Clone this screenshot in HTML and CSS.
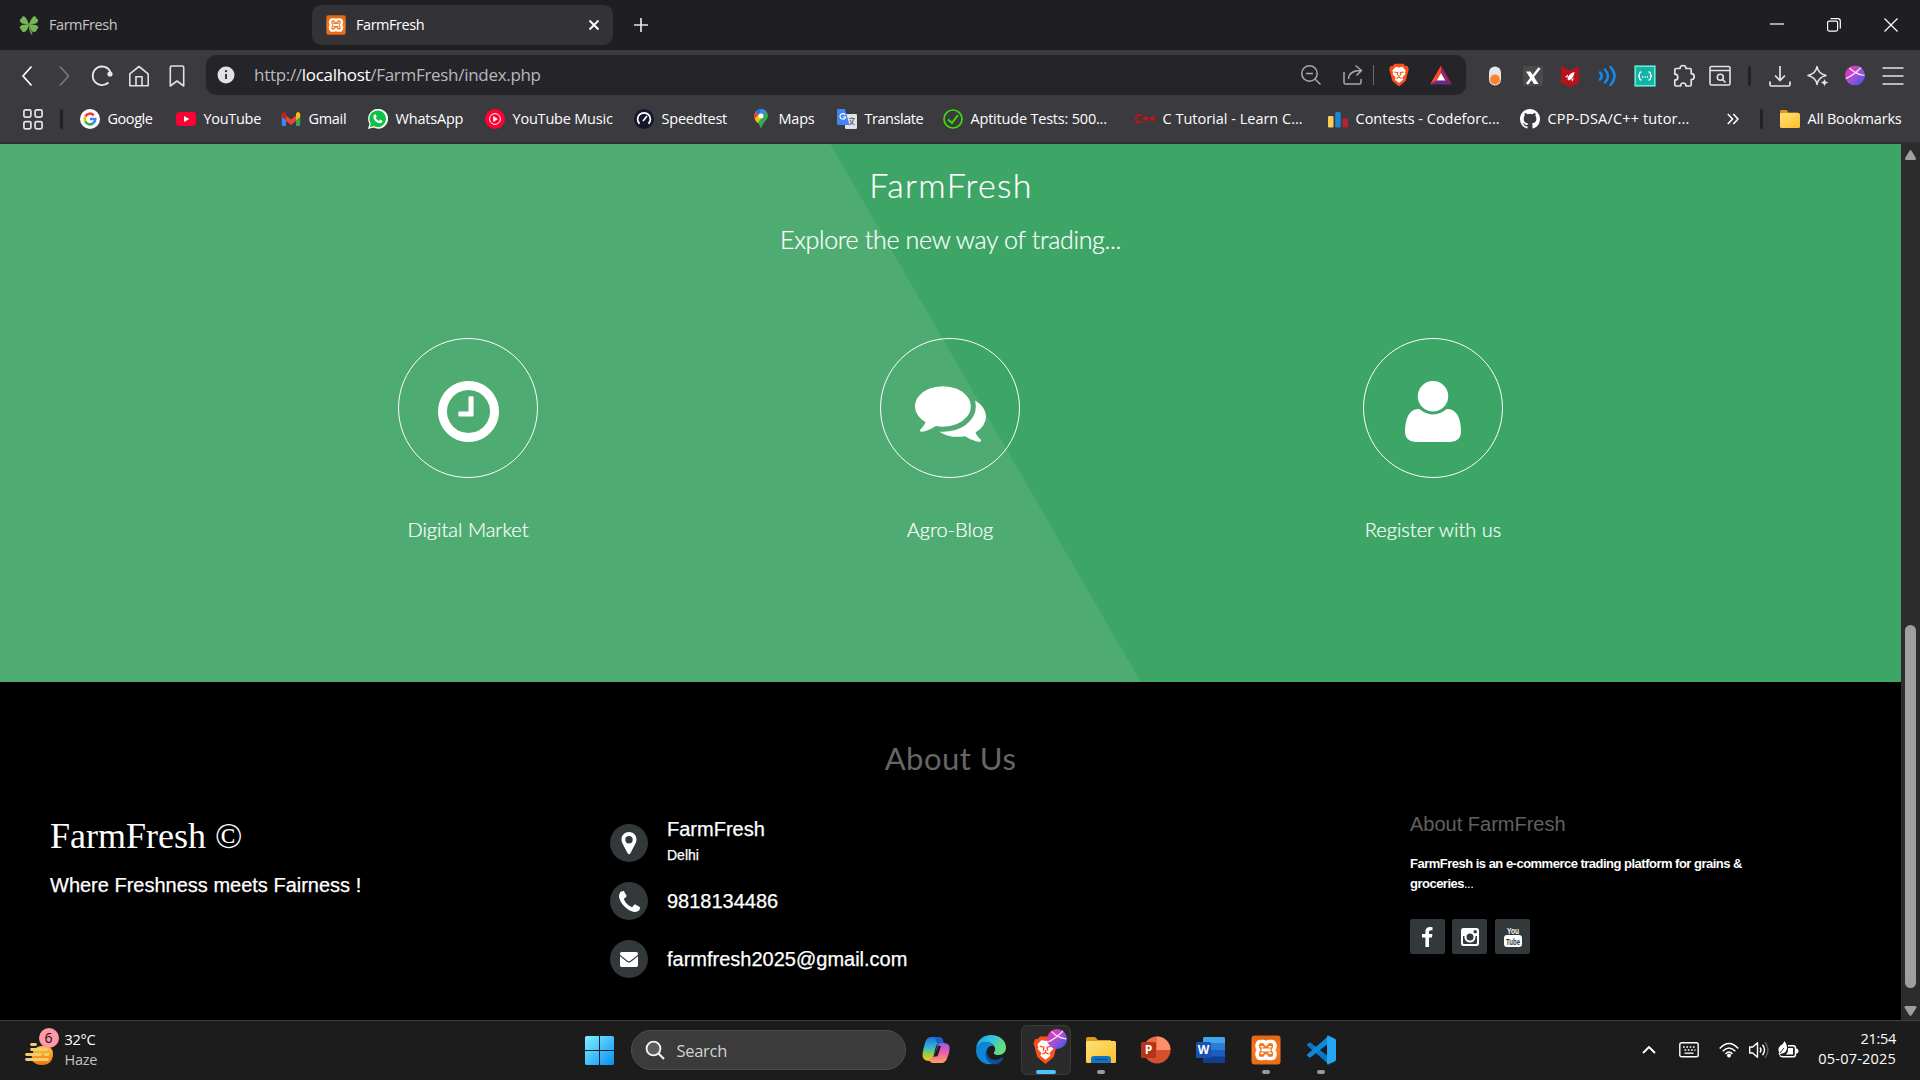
FILE: index.html
```html
<!DOCTYPE html>
<html lang="en">
<head>
<meta charset="utf-8">
<title>FarmFresh</title>
<link rel="stylesheet" href="styles.css">
</head>
<body>
<svg class="defs" width="0" height="0">
  <defs>
    <linearGradient id="gBall" x1="0" y1="0" x2="1" y2="1"><stop offset="0" stop-color="#f52fa0"/><stop offset=".5" stop-color="#a94fd8"/><stop offset="1" stop-color="#3157e0"/></linearGradient>
    <linearGradient id="gXampp" x1="0" y1="0" x2="0" y2="1"><stop offset="0" stop-color="#e0660f"/><stop offset=".5" stop-color="#fb7a24"/><stop offset="1" stop-color="#e86a12"/></linearGradient>
    <linearGradient id="gFolder" x1="0" y1="0" x2="1" y2="1"><stop offset="0" stop-color="#ffe07a"/><stop offset="1" stop-color="#fbc02a"/></linearGradient>
    <linearGradient id="gWin" x1="0" y1="0" x2="1" y2="1"><stop offset="0" stop-color="#7df0ff"/><stop offset="1" stop-color="#0a8ff5"/></linearGradient>
    <linearGradient id="gEdge" x1="0" y1="0" x2="1" y2=".4"><stop offset="0" stop-color="#1f9de0"/><stop offset=".5" stop-color="#2fc3e0"/><stop offset="1" stop-color="#66e07a"/></linearGradient>
    <linearGradient id="gCopA" x1="0" y1="0" x2="0" y2="1"><stop offset="0" stop-color="#1a6fe8"/><stop offset=".45" stop-color="#35b8d0"/><stop offset=".7" stop-color="#8ed04a"/><stop offset="1" stop-color="#ffc812"/></linearGradient>
    <linearGradient id="gCopB" x1="0" y1="0" x2="0" y2="1"><stop offset="0" stop-color="#9a55ee"/><stop offset=".5" stop-color="#ee5fa8"/><stop offset="1" stop-color="#ffa060"/></linearGradient>
    <linearGradient id="gSun" x1="0" y1="0" x2="0" y2="1"><stop offset="0" stop-color="#ffc83a"/><stop offset="1" stop-color="#ee7410"/></linearGradient>
    <symbol id="xampp" viewBox="0 0 30 30">
      <rect x=".5" y=".5" width="29" height="29" rx="3" fill="url(#gXampp)"/>
      <path d="M9.500 6.500h3q1.500 0 2.500 2.500 1-2.500 2.500-2.500h3c3.500 0 4.500 5 2 8.500 2.500 3.500 1.500 8.500-2 8.500h-3q-1.500 0-2.500-2.500-1 2.500-2.500 2.500h-3c-3.500 0-4.500-5-2-8.500-2.500-3.500-1.500-8.500 2-8.500z" fill="none" stroke="#fff" stroke-width="3.600" stroke-linejoin="round"/>
      <path d="M10.500 15h9M11 11v1.500M19 11v1.500M11 17.500V19M19 17.500V19" fill="none" stroke="#fff" stroke-width="3"/>
    </symbol>
    <symbol id="brave" viewBox="0 0 24 28">
      <path d="M7 1h10l2.500 2.500L22 3.600l1.500 4-1 3-2.600 10L12 27.500l-7.900-6.900-2.600-10-1-3 1.500-4 2.500-.1z" fill="#fb4f1c"/>
      <path d="M8.200 4.500 12 5.300l3.800-.8 4 4.200-1 2.300.8 1.700-3.700 4.200 1 2.500-4.900 4-4.900-4 1-2.500L4.400 12.700l.8-1.700-1-2.300z" fill="#fff"/>
      <path d="M6.500 10.500l4 .8-.6 3.200M17.500 10.500l-4 .8.6 3.200M9 18l3-1.600 3 1.600M12 16v-2" fill="none" stroke="#fb4f1c" stroke-width="1.300"/>
    </symbol>
    <symbol id="ball" viewBox="0 0 20 20">
      <circle cx="10" cy="10" r="10" fill="url(#gBall)"/>
      <path d="M.8 13Q9 9.500 16 2M4.500 2.500Q10 8.500 19.500 10" fill="none" stroke="#fbdcf6" stroke-width="1.200"/>
    </symbol>
    <symbol id="folder" viewBox="0 0 20 20">
      <path d="M0 2.500Q0 1 1.500 1h5l2 2.500H18V8H0z" fill="#dc9a12"/>
      <rect x="0" y="4" width="20" height="15" rx="1.500" fill="url(#gFolder)"/>
    </symbol>
  </defs>
</svg>

<header class="browser">
  <div class="tabs">
    <div class="tab">
      <svg class="fav" viewBox="0 0 20 20"><path d="M10 9.500C8 4 6 0 3.500 1.500 2.500 2.300 3 3.500 2.500 3.500 0 3.500.5 8 4 8.800 7 9.400 9 9.500 10 9.500zM10 9.500C12 4 14 0 16.500 1.500c1 .8.500 2 1 2 2.500 0 2 4.500-1.500 5.300-3 .6-5 .7-6 .7zM10 9.500C5 9.500.5 10 .8 12.500c.2 1.500 1.400 1.500 1.400 2 0 2.500 3.300 3.500 5 1.500 1.500-2 2.500-4.500 2.800-6.500zM10 9.500c5 0 9.500.5 9.200 3-.2 1.500-1.400 1.500-1.400 2 0 2.500-3.300 3.500-5 1.500-1.500-2-2.500-4.500-2.800-6.500z" fill="#75b555"/><path d="M10 9q.2 6 3 10.500" fill="none" stroke="#5d9a3e" stroke-width="1.600"/></svg>
      <span class="ui">FarmFresh</span>
    </div>
    <div class="tab tab-active">
      <svg class="fav"><use href="#xampp"/></svg>
      <span class="ui">FarmFresh</span>
      <svg class="tab-close" viewBox="0 0 12 12"><path d="M1.500 1.500l9 9M10.500 1.500l-9 9" stroke="#fff" stroke-width="1.900"/></svg>
    </div>
    <svg class="plus" viewBox="0 0 14 14"><path d="M7 0v14M0 7h14" stroke="#e4e4e6" stroke-width="1.700"/></svg>
    <div class="wincontrols">
      <svg viewBox="0 0 14 14"><path d="M0 6h14" stroke="#fff" stroke-width="1.200"/></svg>
      <svg viewBox="0 0 14 14"><rect x=".6" y="3.100" width="10" height="10" rx="1.500" fill="none" stroke="#fff" stroke-width="1.200"/><path d="M3.500.7h7.300q2.500 0 2.500 2.500v7.300" fill="none" stroke="#fff" stroke-width="1.200"/></svg>
      <svg viewBox="0 0 14 14"><path d="M.5.5l13 13M13.500.5l-13 13" stroke="#fff" stroke-width="1.200"/></svg>
    </div>
  </div>

  <div class="toolbar">
    <div class="slots nav">
      <svg viewBox="0 0 24 24"><path d="M16.500 2.500 8 12l8.500 9.500" fill="none" stroke="#fff" stroke-width="1.700"/></svg>
      <svg viewBox="0 0 24 24"><path d="M8 2.500 16.500 12 8 21.500" fill="none" stroke="#77767b" stroke-width="1.700"/></svg>
      <svg viewBox="0 0 24 24"><path d="M18.500 18.500A9.300 9.300 0 1 1 20.500 8" fill="none" stroke="#e8e8ea" stroke-width="1.800"/><circle cx="20" cy="10" r="2.600" fill="#e8e8ea"/></svg>
      <svg viewBox="0 0 24 24"><path d="M2.800 9.800 12 2.500l9.200 7.300v12H2.800z" fill="none" stroke="#e0e0e2" stroke-width="1.600" stroke-linejoin="round"/><path d="M9 21.500v-8.700h6v8.700" fill="none" stroke="#e0e0e2" stroke-width="1.600"/></svg>
      <svg viewBox="0 0 24 24"><path d="M5.300 22V3.500Q5.300 2 6.800 2h10.400q1.500 0 1.500 1.500V22L12 17z" fill="none" stroke="#e0e0e2" stroke-width="1.600" stroke-linejoin="round"/></svg>
    </div>
    <div class="urlbar">
      <svg class="info" viewBox="0 0 18 18"><circle cx="9" cy="9" r="8.500" fill="#e2e1e6"/><path d="M9 8v5" stroke="#252428" stroke-width="1.800"/><circle cx="9" cy="5.200" r="1.100" fill="#252428"/></svg>
      <span class="url">http://<b>localhost</b>/FarmFresh/index.php</span>
      <div class="urltools">
        <svg viewBox="0 0 24 24"><circle cx="10.500" cy="10.500" r="7.700" fill="none" stroke="#a9a9ad" stroke-width="1.500"/><path d="M16 16l5.500 5.500M7 10.500h7" stroke="#a9a9ad" stroke-width="1.500"/></svg>
        <svg viewBox="0 0 24 24"><path d="M3 9v10.500Q3 21 4.500 21h14q1.500 0 1.500-1.500V16" fill="none" stroke="#a9a9ad" stroke-width="1.500"/><path d="M7.500 16q.5-8.500 12.500-8.500M14.500 2.500l6 5-5 5" fill="none" stroke="#a9a9ad" stroke-width="1.500"/></svg>
        <i></i>
        <svg viewBox="0 0 24 24"><use href="#brave" x="1.500" y="0" width="21" height="24"/></svg>
        <svg viewBox="0 0 24 24"><path d="M12 2.500 1 21.500l7-4L12 10z" fill="#ff4724"/><path d="M12 2.500l11 19-7-4-4-7.500z" fill="#9e1f63"/><path d="M1 21.500h22l-7-4H8z" fill="#662d91"/><path d="M12 10l4.300 7.500H7.700z" fill="#fff"/></svg>
      </div>
    </div>
    <div class="slots ext">
      <svg viewBox="0 0 24 24"><rect x="6" y="2.500" width="12" height="19" rx="6" fill="#e6e6e6"/><circle cx="12" cy="15.500" r="5" fill="#ff812d"/></svg>
      <svg viewBox="0 0 24 24"><rect x="2" y="2" width="20" height="20" fill="#4b4a4a"/><path d="M5 7.500h4.500l8 12.500h-4.500z" fill="#fff"/><path d="M18.500 4 6 20" stroke="#fff" stroke-width="2.500"/></svg>
      <svg viewBox="0 0 24 24"><path d="M3 2l9 4.500L21 2v17l-9 4-9-4z" fill="#b8121a"/><path d="M9.500 15.500q.5-6 7-7.500-.5 6-5.500 8.500zM10 10.500l-3 2.500 2.500.5M13.500 15l.5 3 2-4z" fill="#fff"/></svg>
      <svg viewBox="0 0 24 24"><path d="M4 8.500q3.500 3.500 0 7M9 5.500q6 6.500 0 13M14.500 3q8 9 0 18" fill="none" stroke="#0b8df5" stroke-width="2.500" stroke-linecap="round"/></svg>
      <svg viewBox="0 0 24 24"><rect x="2.200" y="2.200" width="19.600" height="19.600" fill="#10b5a5" stroke="#63ecd8" stroke-width="1.600"/><path d="M8.500 8q-2 0-2 2 0 2-1.500 2 1.500 0 1.500 2t2 2M15.500 8q2 0 2 2 0 2 1.500 2-1.500 0-1.500 2t-2 2" fill="none" stroke="#fff" stroke-width="1.300"/><path d="M9 13h1.200M11.500 13h1.200M14 13h1.200" stroke="#fff" stroke-width="1.300"/></svg>
      <svg viewBox="0 0 24 24"><path d="M5 4.500h4Q9 1.500 12 1.500t3 3h4q1.200 0 1.200 1.200v4q3 0 3 3t-3 3v5.100q0 1.200-1.200 1.200h-4q0-3-2.700-3t-2.700 3H5q-1.200 0-1.200-1.200v-4.600q3 0 3-3t-3-3V5.700Q3.800 4.500 5 4.500z" fill="none" stroke="#e4e4e6" stroke-width="1.700" stroke-linejoin="round"/></svg>
      <svg viewBox="0 0 24 24"><rect x="2" y="2.500" width="20" height="18.500" rx="1.500" fill="none" stroke="#e4e4e6" stroke-width="1.600"/><path d="M2 6.500h20M14.500 15.500l3 3" stroke="#e4e4e6" stroke-width="1.600"/><circle cx="12.300" cy="13.200" r="3" fill="none" stroke="#e4e4e6" stroke-width="1.600"/></svg>
    </div>
    <i class="sep"></i>
    <div class="slots">
      <svg viewBox="0 0 24 24"><path d="M12 2v14M7 11.500l5 5 5-5M2 17.500v3Q2 22 3.500 22h17q1.500 0 1.500-1.500v-3" fill="none" stroke="#e4e4e6" stroke-width="1.700"/></svg>
      <svg viewBox="0 0 24 24"><path d="M11 2.500q1 7 9 9-8 2-9 9-1-7-9-9 8-2 9-9z" fill="none" stroke="#e4e4e6" stroke-width="1.600" stroke-linejoin="round"/><path d="M18.500 13.500v9M14 18h9" stroke="#3b3a3f" stroke-width="4"/><path d="M18.500 15q.5 3 4 3.500-3.500.5-4 4-.5-3.500-4-4 3.500-.5 4-3.500z" fill="#e4e4e6"/></svg>
      <svg viewBox="0 0 24 24"><use href="#ball" x="2" y="1.500" width="20" height="20"/></svg>
      <svg viewBox="0 0 24 24"><path d="M1.500 4h21M1.500 12h21M1.500 20h21" stroke="#e4e4e6" stroke-width="1.600"/></svg>
    </div>
  </div>

  <div class="bookmarks">
    <svg class="apps" viewBox="0 0 20 21"><g fill="none" stroke="#e4e4e6" stroke-width="1.700"><rect x=".9" y=".9" width="7" height="7.200" rx="1.500"/><rect x="12.100" y=".9" width="7" height="7.200" rx="1.500"/><rect x=".9" y="12.600" width="7" height="7.200" rx="1.500"/><rect x="12.100" y="12.600" width="7" height="7.200" rx="1.500"/></g></svg>
    <i class="sep"></i>
    <div class="links">
      <div class="bm"><svg viewBox="0 0 20 20"><circle cx="10" cy="10" r="10" fill="#fff"/><g fill="none" stroke-width="2.600"><path d="M5.300 7.500A5.300 5.300 0 0 1 13.800 6.300" stroke="#ea4335"/><path d="M5.300 12.500a5.300 5.300 0 0 1 0-5" stroke="#fbbc05"/><path d="M13.500 14A5.300 5.300 0 0 1 5.300 12.500" stroke="#34a853"/><path d="M10 10h5.300q0 2.600-1.900 4.100" stroke="#4285f4"/></g></svg><span class="ui">Google</span></div>
      <div class="bm"><svg viewBox="0 0 20 20"><rect y="3" width="20" height="14" rx="3.500" fill="#ff0033"/><path d="M8 7l5.300 3L8 13z" fill="#fff"/></svg><span class="ui wide-1">YouTube</span></div>
      <div class="bm"><svg viewBox="0 0 20 20"><path d="M.8 5v10.500q0 1.500 1.500 1.500H5V7z" fill="#4285f4"/><path d="M19.200 5v10.500q0 1.500-1.500 1.500H15V7z" fill="#34a853"/><path d="M5 6.500l5 4 5-4V12l-5 4-5-4z" fill="#ea4335"/><path d="M.8 5.500Q1 2.500 3.500 3L5 4.500V11L.8 8z" fill="#c5221f"/><path d="M19.200 5.500Q19 2.500 16.500 3L15 4.500V11l4.200-3z" fill="#fbbc04"/></svg><span class="ui wide-1">Gmail</span></div>
      <div class="bm"><svg viewBox="0 0 20 20"><path d="M0 20l1.500-5.200A10 10 0 1 1 5.500 18.600z" fill="#fff"/><path d="M1.800 18.200l1-3.700A8.300 8.300 0 1 1 5.700 17.100z" fill="#0ac346"/><path d="M6 6q1.300-1.700 2 0l.7 1.600-1 1.300q1 2 3.200 3l1.200-1.300 2.400 1.200q0 2.500-2.800 2.500Q7 13.500 5.500 9 5.200 7 6 6z" fill="#fff"/></svg><span class="ui wide-2">WhatsApp</span></div>
      <div class="bm"><svg viewBox="0 0 20 20"><circle cx="10" cy="10" r="10" fill="#f03"/><circle cx="10" cy="10" r="5.400" fill="none" stroke="#fff" stroke-width="1"/><path d="M8.200 7l4.800 3-4.800 3z" fill="#fff"/></svg><span class="ui wide-2">YouTube Music</span></div>
      <div class="bm"><svg viewBox="0 0 20 20"><circle cx="10" cy="10" r="10" fill="#16162c"/><path d="M5.500 14.800A6.400 6.400 0 1 1 14.500 14.800" fill="none" stroke="#fff" stroke-width="1.800"/><path d="M9 12l4-5" stroke="#fff" stroke-width="1.700"/></svg><span class="ui wide-2">Speedtest</span></div>
      <div class="bm"><svg viewBox="0 0 20 20"><path d="M3 7a7 7 0 0 1 14 0c0 4-5 6-7 13C8 13 3 11 3 7z" fill="#34a853"/><path d="M4.500 2.700A7 7 0 0 1 15.400 2.600L10 7z" fill="#4285f4"/><path d="M10 0a7 7 0 0 0-5.500 2.700L8 5.700z" fill="#1a73e8"/><path d="M4.500 2.700Q2 6 3.700 10L8 5.700z" fill="#ea4335"/><path d="M3.700 9.800 8.500 4.600l2 4.400-4 5q-2-2-2.800-4.200z" fill="#fbbc04"/><circle cx="10" cy="7" r="2.500" fill="#fff"/></svg><span class="ui wide-2">Maps</span></div>
      <div class="bm"><svg viewBox="0 0 20 20"><rect x="8" y="5" width="12" height="15" rx="1.200" fill="#dfe2e6"/><path d="M12 9.500h6M15 8v1.500M17 9.500q-1 4-4.500 6.500M13 11q1 3 4.500 5" fill="none" stroke="#6b7a86" stroke-width="1.100"/><path d="M1.200 0H8l4.500 16H1.200Q0 16 0 14.800V1.200Q0 0 1.200 0z" fill="#4285f4"/><path d="M8.300 6A2.800 2.800 0 1 0 8.600 8H6" fill="none" stroke="#fff" stroke-width="1.200"/></svg><span class="ui">Translate</span></div>
      <div class="bm"><svg viewBox="0 0 20 20"><circle cx="10" cy="10" r="9" fill="none" stroke="#42d90b" stroke-width="1.700"/><path d="M5 10.500l4 3.500 6-8" fill="none" stroke="#42d90b" stroke-width="2"/></svg><span class="ui wide-2">Aptitude Tests: 500...</span></div>
      <div class="bm"><svg viewBox="0 0 20 20"><path d="M6.500 7Q5.500 6 4 6T1.800 6.800 1 8v3q0 1.500 1 2t2 .3q1.500 0 2.500-1M8 9.500h5.500M10.700 7v5.500M14.500 9.500H20M17.300 7v5.500" fill="none" stroke="#f00" stroke-width="1.300"/></svg><span class="ui wide-3">C Tutorial - Learn C...</span></div>
      <div class="bm"><svg viewBox="0 0 20 20"><rect x="0" y="7" width="5.500" height="11.500" rx="1" fill="#f8cd56"/><rect x="7.200" y="3" width="5.500" height="15.500" rx="1" fill="#1a87cf"/><rect x="14.500" y="9.500" width="5.500" height="9" rx="1" fill="#b7222b"/></svg><span class="ui wide-3">Contests - Codeforc...</span></div>
      <div class="bm"><svg viewBox="0 0 16 16"><path fill="#fff" d="M8 0C3.580 0 0 3.580 0 8c0 3.540 2.290 6.530 5.470 7.590.4.070.55-.17.55-.38 0-.19-.01-.82-.01-1.490-2.010.37-2.530-.49-2.690-.94-.09-.23-.48-.94-.82-1.130-.28-.15-.68-.52-.01-.53.63-.01 1.080.58 1.230.82.72 1.210 1.870.87 2.330.66.07-.52.28-.87.51-1.070-1.780-.2-3.640-.89-3.640-3.950 0-.87.31-1.590.82-2.150-.08-.2-.36-1.020.08-2.120 0 0 .67-.21 2.200.82a7.600 7.600 0 0 1 4 0c1.530-1.040 2.200-.82 2.200-.82.44 1.100.16 1.920.08 2.120.51.56.82 1.270.82 2.150 0 3.070-1.870 3.750-3.650 3.950.29.25.54.73.54 1.480 0 1.070-.01 1.930-.01 2.200 0 .21.15.46.55.38A8 8 0 0 0 16 8c0-4.420-3.580-8-8-8z"/></svg><span class="ui wide-4">CPP-DSA/C++ tutor...</span></div>
    </div>
    <svg class="more" viewBox="0 0 12 12"><path d="M.8 1l4.700 5-4.700 5M6.300 1 11 6l-4.700 5" fill="none" stroke="#fff" stroke-width="1.600"/></svg>
    <i class="sep"></i>
    <div class="bm all"><svg><use href="#folder"/></svg><span class="ui wide-2">All Bookmarks</span></div>
  </div>
</header>

<div class="view">
  <main class="page">
    <section class="hero">
      <h1>FarmFresh</h1>
      <p class="lead">Explore the new way of trading...</p>
      <div class="features">
        <div class="feature">
          <div class="ring"><svg width="61" height="61" viewBox="0 128 1536 1536"><path fill="#fff" d="M896 544v448q0 14-9 23t-23 9h-320q-14 0-23-9t-9-23v-64q0-14 9-23t23-9h224v-352q0-14 9-23t23-9h64q14 0 23 9t9 23zm416 352q0-148-73-273t-198-198-273-73-273 73-198 198-73 273 73 273 198 198 273 73 273-73 198-198 73-273zm224 0q0 209-103 385.500t-279.500 279.500-385.500 103-385.500-103-279.500-279.500-103-385.500 103-385.500 279.500-279.500 385.500-103 385.500 103 279.500 279.500 103 385.500z"/></svg></div>
          <p>Digital Market</p>
        </div>
        <div class="feature">
          <div class="ring"><svg width="71" height="61" viewBox="0 128 1792 1536"><path fill="#fff" d="M1408 768q0 139-94 257t-256.500 186.500-353.500 68.500q-86 0-176-16-124 88-278 128-36 9-86 16h-3q-11 0-20.500-8t-11.500-21q-1-3-1-6.500t.5-6.500 2-6l2.500-5 3.500-5.500 4-5 4.500-5 4-4.500q5-6 23-25t26-29.500 22.500-29 25-38.500 20.500-44q-124-72-195-177t-71-224q0-139 94-257t256.500-186.500 353.500-68.500 353.500 68.500 256.500 186.500 94 257zm384 256q0 120-71 224.500t-195 176.500q10 24 20.500 44t25 38.500 22.500 29 26 29.500 23 25q1 1 4 4.500t4.500 5 4 5 3.500 5.500l2.500 5 2 6 .5 6.500-1 6.500q-3 14-13 22t-22 7q-50-7-86-16-154-40-278-128-90 16-176 16-271 0-472-132 58 4 88 4 161 0 309-45t264-129q125-92 192-212t67-254q0-77-23-152 129 71 204 178t75 230z"/></svg></div>
          <p>Agro-Blog</p>
        </div>
        <div class="feature">
          <div class="ring"><svg width="56" height="61" viewBox="0 128 1408 1536"><path fill="#fff" d="M1408 1405q0 120-73 189.500t-194 69.500h-874q-121 0-194-69.500t-73-189.500q0-53 3.500-103.500t14-109 26.500-108.500 43-97.500 62-81 85.500-53.500 111.500-20q9 0 42 21.500t74.500 48 108 48 133.500 21.500 133.500-21.500 108-48 74.500-48 42-21.500q61 0 111.500 20t85.500 53.500 62 81 43 97.500 26.500 108.500 14 109 3.500 103.500zm-320-893q0 159-112.500 271.500t-271.500 112.500-271.500-112.500-112.500-271.500 112.500-271.500 271.500-112.500 271.500 112.500 112.500 271.500z"/></svg></div>
          <p>Register with us</p>
        </div>
      </div>
    </section>

    <footer class="footer">
      <h2>About Us</h2>
      <div class="cols">
        <div class="brand">
          <h3>FarmFresh ©</h3>
          <p>Where Freshness meets Fairness !</p>
        </div>
        <div class="contact">
          <div class="crow">
            <span class="dot"><svg width="16" height="24" viewBox="0 0 16 24"><path fill="#fff" fill-rule="evenodd" d="M8 1c4.300 0 7.500 3.300 7.500 7.500 0 1.500-.3 2.800-1 4L9.500 22q-1.500 2.500-3 0L1.500 12.500c-.7-1.200-1-2.500-1-4C.5 4.300 3.700 1 8 1zm0 4a3.700 3.700 0 1 0 0 7.400A3.700 3.700 0 0 0 8 5z"/></svg></span>
            <div class="where"><p>FarmFresh</p><small>Delhi</small></div>
          </div>
          <div class="crow">
            <span class="dot"><svg width="21" height="21" viewBox="0 0 1408 1408"><path fill="#fff" d="M1408 1112q0 27-10 70.500t-21 68.500q-21 50-122 106-94 51-186 51-27 0-52.500-3.500t-57.500-12.500-47.500-14.500-55.500-20.500-49-18q-98-35-175-83-128-79-264.500-215.500t-215.500-264.500q-48-77-83-175-3-9-18-49t-20.500-55.500-14.500-47.500-12.500-57.500-3.500-52.500q0-92 51-186 56-101 106-122 25-11 68.500-21t70.500-10q14 0 21 3 18 6 53 76 11 19 30 54t35 63.500 31 53.500q3 4 17.500 25t21.500 35.500 7 28.500q0 20-28.500 50t-62 55-62 53-28.500 46q0 9 5 22.500t8.500 20.500 14 24 11.500 19q76 137 174 235t235 174q2 1 19 11.500t24 14 20.500 8.500 22.500 5q18 0 46-28.500t53-62 55-62 50-28.500q14 0 28.500 7t35.500 21.500 25 17.500q25 15 53.500 31t63.500 35 54 30q70 35 76 53 3 7 3 21z"/></svg></span>
            <p>9818134486</p>
          </div>
          <div class="crow">
            <span class="dot"><svg width="18" height="15" viewBox="0 0 18 15"><path fill="#fff" d="M1.500 0h15Q18 0 18 1.500T16.500 4L10 9q-1 .7-2 0L1.500 4Q0 3 0 1.500T1.500 0z"/><path fill="#fff" d="M0 4.300 7.300 10q1.700 1.200 3.400 0L18 4.300v9q0 1.700-1.500 1.700h-15Q0 15 0 13.300z"/></svg></span>
            <p>farmfresh2025@gmail.com</p>
          </div>
        </div>
        <div class="about">
          <h4>About FarmFresh</h4>
          <div class="desc">
            <p><b>FarmFresh is an e-commerce trading platform for grains &amp;</b></p>
            <p><b>groceries</b>...</p>
          </div>
          <div class="social">
            <span><svg width="11" height="20" viewBox="0 0 11 20"><path fill="#fff" d="M10.500.2v3.100H8.700Q7 3.300 7 4.900v2.200h3.400L10 10.500H7V20H3.400v-9.500H0V7.100h3.400V4.600Q3.400 0 8 0q1.500 0 2.500.2z"/></svg></span>
            <span><svg width="18" height="18" viewBox="0 0 18 18"><rect width="18" height="18" rx="2.500" fill="#fff"/><path d="M2 8v6.700Q2 16 3.300 16h11.400q1.300 0 1.300-1.300V8" fill="#33383b"/><circle cx="9" cy="9" r="5.600" fill="#fff"/><circle cx="9" cy="9" r="3.500" fill="#33383b"/><rect x="12.600" y="2.300" width="3.200" height="3" rx=".7" fill="#33383b"/></svg></span>
            <span class="yt"><svg width="18" height="22" viewBox="0 0 18 22"><rect x="0" y="9" width="18" height="12" rx="3" fill="#fff"/><text class="you" x="3" y="8" textLength="12" lengthAdjust="spacingAndGlyphs">You</text><text class="tube" x="2" y="18.500" textLength="14" lengthAdjust="spacingAndGlyphs">Tube</text></svg></span>
          </div>
        </div>
      </div>
    </footer>
  </main>
  <div class="scrollbar">
    <svg width="13" height="10" viewBox="0 0 13 10"><path d="M6.500 0 Q7.500 0 12 8.500 12 10 11 10H2Q1 10 1 8.500 5.500 0 6.500 0z" fill="#9f9f9f"/></svg>
    <div class="thumb"></div>
    <svg width="13" height="10" viewBox="0 0 13 10"><path d="M6.500 10Q7.500 10 12.500 1.500 12.500 0 11.500 0h-10Q.5 0 .5 1.500 5.500 10 6.500 10z" fill="#9f9f9f"/></svg>
  </div>
</div>

<div class="taskbar">
  <div class="weather">
    <div class="wicon">
      <svg width="30" height="30" viewBox="0 0 30 30"><path d="M8 17q2-9 10-9 11 0 11 7 0 12-11 12Q11 27 7.500 22z" fill="url(#gSun)"/><path d="M7.500 6.500h4M7.500 11.500h15M2.500 16.500h14M21 16.500h3M2.500 21.500h21" stroke="#f0ce6c" stroke-width="2.800" stroke-linecap="round"/></svg>
      <span class="badge">6</span>
    </div>
    <div class="wtext"><span>32°C</span><span class="dim">Haze</span></div>
  </div>
  <div class="dock">
    <div class="app start"><svg width="29" height="29" viewBox="0 0 29 29"><path d="M1.500 0H14v14H0V1.500Q0 0 1.500 0zM15 0h12.500Q29 0 29 1.500V14H15zM0 15h14v14H1.500Q0 29 0 27.500zM15 15h14v12.500q0 1.500-1.500 1.500H15z" fill="url(#gWin)"/></svg></div>
    <div class="search"><svg width="20" height="20" viewBox="0 0 20 20"><circle cx="8.500" cy="8.500" r="6.900" fill="#5c5c5c" stroke="#f2f2f2" stroke-width="1.900"/><path d="M13.500 13.500l5.500 5.500" stroke="#f2f2f2" stroke-width="2.100"/></svg><span>Search</span></div>
    <div class="app"><svg width="30" height="30" viewBox="0 0 30 30"><path d="M10 2h8q3 0 4 4l1 3h-5q-2.500 0-3.500 4l-2 8q-1.500 5-4.500 5-7 0-6.500-7 .5-4 2.500-11 1.500-6 6-6z" fill="url(#gCopA)"/><path d="M13 2h5q3 0 4 4l1 3h-5q-2 0-3-3-.5-3-2-4z" fill="#1464c8"/><path d="M20 28h-8q-3 0-4-4l2-1q3 0 4-4l2-7q1.500-4 4-4h2.500q7 0 6 7-.500 4-2 7-1.500 6-6.500 6z" fill="url(#gCopB)"/><path d="M17 11h3l-3 9q-.5 1.500-2 1.500h-2.500q1-1 1.500-2.500z" fill="#1c1c1c"/></svg></div>
    <div class="app"><svg width="30" height="30" viewBox="0 0 30 30"><path d="M0 14C1 5 7 0 15 0c8.500 0 15 5.500 15 12.500 0 4.500-3 7.500-7.500 7.500-4 0-5.300-1.500-4.500-2.700 1-1.500 1.300-2.500 1-4C18.500 9.500 14 7 9.500 7 5 7 1.500 10 0 14z" fill="url(#gEdge)"/><path d="M0 15C.5 10 4.500 7 9.500 7c3 0 6.500 1.500 8.500 4-5-1-7.500 2.500-7.500 6.500 0 5 4 9 8.500 10.500-9 4-19-2-19-13z" fill="#0e86d8"/><path d="M11.500 14q-2 6 3 9.500 5 3 10.500-.5l2-.5q.5.500 0 1.500-3.500 5.500-9 5.500c-8-2-11-11-6.500-15.500z" fill="#0d4e98"/></svg></div>
    <div class="app active"><svg width="25" height="30"><use href="#brave"/></svg><svg class="ballbadge" width="20" height="20"><use href="#ball"/></svg></div>
    <div class="app open"><svg width="30" height="28" viewBox="0 0 30 28"><path d="M0 3q0-2 2-2h7l3 3h13v5H0z" fill="#dc9b10"/><rect y="5" width="30" height="22" rx="1.500" fill="url(#gFolder)"/><path d="M5 27v-4q0-3 3-3h14q3 0 3 3v4z" fill="#1474c4"/><path d="M9 23.500h12" stroke="#0b4f8c" stroke-width="1.500"/></svg></div>
    <div class="app"><svg width="30" height="28" viewBox="0 0 30 28"><circle cx="16" cy="14" r="13.500" fill="#d6502e"/><path d="M16 .5A13.500 13.500 0 0 1 29.500 14H16z" fill="#ff8f6b"/><path d="M16 .5V14H3Q3 2 16 .5z" fill="#ee6c47"/><rect x="0" y="6" width="15" height="16" rx="1.500" fill="#b83418"/><text x="7.500" y="18.300" text-anchor="middle" class="glyph">P</text></svg></div>
    <div class="app"><svg width="30" height="28" viewBox="0 0 30 28"><rect x="7" y="1" width="22" height="26" rx="1.500" fill="#1b5dbe"/><path d="M7 7.500V2.500Q7 1 8.500 1h19Q29 1 29 2.500v5z" fill="#41a5ee"/><path d="M7 7.500h22V14H7z" fill="#2b7cd3"/><path d="M7 20.500h22v5q0 1.500-1.500 1.500h-19Q7 27 7 25.500z" fill="#103f91"/><rect x="0" y="6" width="15" height="16" rx="1.500" fill="#1a52b4"/><text x="7.500" y="18.300" text-anchor="middle" class="glyph">W</text></svg></div>
    <div class="app open"><svg width="30" height="30"><use href="#xampp"/></svg></div>
    <div class="app open"><svg width="30" height="30" viewBox="0 0 30 30"><path d="M1 9.500l2-1.700q1-.6 2 .2L23 22v7.500L1 10.500z" fill="#0a78c8"/><path d="M1 20.500l2 1.700q1 .6 2-.2L23 8V.5L1 19.500z" fill="#1088d6"/><path d="M22 .5l6.500 3q1.500.7 1.500 2v19q0 1.300-1.500 2l-6.500 3q-1 0-1-1.500V2q0-1.500 1-1.500z" fill="#27a5f5"/></svg></div>
  </div>
  <div class="tray">
    <svg class="up" width="14" height="8" viewBox="0 0 14 8"><path d="M1 7l6-6 6 6" fill="none" stroke="#fff" stroke-width="1.900"/></svg>
    <svg class="kbd" width="20" height="16" viewBox="0 0 20 16"><rect x=".8" y=".8" width="18.400" height="13.900" rx="1.800" fill="none" stroke="#fff" stroke-width="1.400"/><path d="M4 5h13M5.500 8h11" stroke="#fff" stroke-width="1.600" stroke-dasharray="1.700 1.600"/><path d="M5.500 11.200h9" stroke="#fff" stroke-width="1.300"/></svg>
    <svg class="wifi" width="20" height="16" viewBox="0 0 20 16"><path d="M.7 6.500Q10-3.500 19.300 6.500M3.700 9.300Q10 2.500 16.300 9.300M6.500 12Q10 8 13.500 12" fill="none" stroke="#fff" stroke-width="1.500"/><circle cx="10" cy="13.500" r="2" fill="#fff"/></svg>
    <svg class="vol" width="20" height="18" viewBox="0 0 20 18"><path d="M.7 6h3L8.500 1.800v14.400L3.700 12h-3z" fill="none" stroke="#fff" stroke-width="1.400" stroke-linejoin="round"/><path d="M11 6.500q2 2.500 0 5M13.500 3.800q4 5.200 0 10.400" fill="none" stroke="#fff" stroke-width="1.400"/><path d="M16 1.200q6 7.800 0 15.600" fill="none" stroke="#5c5c5c" stroke-width="1.400"/></svg>
    <svg class="bat" width="21" height="18" viewBox="0 0 21 18"><path d="M10 4.700h5q2.500 0 2.500 2.500v6q0 2.600-2.500 2.600H5Q2.500 15.800 2 14.500" fill="none" stroke="#fff" stroke-width="1.500"/><path d="M18 7.500q2.500 0 2.500 2.500t-2.500 2.500z" fill="#fff"/><path d="M10 7h5v6.500H7.500Q10.500 12 10 7z" fill="#fff"/><path d="M6.500 0Q10 4.500 8.700 8.500 7.500 12.500 3.500 12.500l-2 1.500-1-1 .8-1.500Q-1 7.500 2.500 4.500 5.500 3 6.500 0z" fill="#fff"/><path d="M2 12 6 7" stroke="#1c1c1c" stroke-width=".9"/></svg>
    <div class="clock"><span>21:54</span><span class="date">05-07-2025</span></div>
  </div>
</div>
</body>
</html>
```
FILE: styles.css
```css
* { box-sizing: border-box; margin: 0; padding: 0; }
body {
  width: 1920px; height: 1080px; overflow: hidden;
  display: flex; flex-direction: column;
  background: #000;
  font-family: "Open Sans", "Noto Sans", sans-serif;
  color: #fff;
}
svg { display: block; flex: none; }
.defs { position: absolute; }
.ui { font-size: 14.5px; letter-spacing: -0.45px; white-space: nowrap; line-height: 20px; }
.wide-1 { letter-spacing: -0.3px; }
.wide-2 { letter-spacing: -0.2px; }
.wide-3 { letter-spacing: 0; }
.wide-4 { letter-spacing: 0.15px; }

/* Browser chrome */
.browser { height: 144px; background: #3b3a3f; border-bottom: 2px solid #303034; flex: none; }
.tabs { height: 50px; background: #1f1e22; display: flex; align-items: center; }
.tab { width: 312px; height: 40px; padding: 0 13px 0 19px; display: flex; align-items: center; gap: 10px; color: #c6c6c8; }
.tab-active { width: 301px; padding-left: 14px; background: #333237; border-radius: 9px; color: #fff; }
.fav { width: 20px; height: 20px; }
.tab-close { width: 12px; height: 12px; margin-left: auto; }
.plus { width: 14px; height: 14px; margin-left: 21px; }
.wincontrols { margin-left: auto; display: flex; gap: 43px; padding-right: 22px; }
.wincontrols svg { width: 14px; height: 14px; }

.toolbar { height: 51px; display: flex; align-items: center; }
.slots { display: flex; }
.slots svg { width: 24px; height: 24px; margin: 0 6.75px; }
.nav { padding-left: 8px; width: 206px; }
.urlbar { width: 1260px; height: 40px; margin-top: -1px; background: #252428; border-radius: 10px; display: flex; align-items: center; padding-left: 11px; }
.info { width: 18px; height: 18px; }
.url { margin-left: 19px; font-size: 17px; letter-spacing: -0.3px; color: #b9b8bd; white-space: nowrap; line-height: 24px; }
.url b { font-weight: 400; color: #fff; }
.urltools { margin-left: auto; display: flex; align-items: center; padding-right: 13px; }
.urltools svg { width: 24px; height: 24px; margin-right: 18px; }
.urltools svg:nth-child(2) { margin-right: 8px; }
.urltools svg:last-child { margin-right: 0; }
.urltools i { width: 1px; height: 20px; background: #6a696e; margin-right: 13px; }
.ext { margin-left: 10.5px; }
.sep { width: 3px; height: 20px; border-radius: 2px; background: #222125; }
.ext + .sep { margin: 0 10.5px 0 9px; }

.bookmarks { height: 36px; display: flex; align-items: center; padding-left: 23px; }
.apps { width: 20px; height: 21px; }
.apps + .sep { margin: 0 17px; }
.links { display: grid; grid-template-columns: 96px 105px 87px 117px 149px 117px 86px 106px 192px 193px 192px 207px; }
.bm { display: flex; align-items: center; gap: 7.5px; }
.bm svg { width: 20px; height: 20px; }
.more { width: 12px; height: 12px; }
.more + .sep { margin: 0 17px 0 21px; }

/* Page viewport */
.view { height: 876px; display: flex; flex: none; }
.page { width: 1901px; }
.hero {
  height: 538px; padding-top: 21px; text-align: center;
  background: linear-gradient(60deg, #4eac73 987.5px, #3da667 988.3px);
  font-family: Lato, sans-serif; font-weight: 300;
  -webkit-text-stroke: .2px #fff;
}
.hero h1 { font-size: 34px; line-height: 40px; font-weight: 300; letter-spacing: 1.3px; padding-left: 1px; }
.lead { margin-top: 19px; font-size: 25px; line-height: 30px; letter-spacing: -.33px; }
.features { margin-top: 84px; display: grid; grid-template-columns: 482px 482px 484px; padding-left: 227px; }
.feature { display: flex; flex-direction: column; align-items: center; }
.ring { width: 140px; height: 140px; border: 1px solid #fff; border-radius: 50%; display: flex; justify-content: center; padding-top: 41.5px; }
.feature p { margin-top: 39px; font-size: 20px; line-height: 24px; }

.footer { height: 338px; padding-top: 57px; background: #000; font-family: "Liberation Sans", Arial, sans-serif; }
.footer h2 { font: 400 31px/38px Lato, sans-serif; color: #666; text-align: center; letter-spacing: .5px; }
.cols { display: grid; grid-template-columns: 560px 800px 345px; padding-left: 50px; }
.cols p { font-size: 20px; line-height: 24px; }
.brand p, .crow p, .where small { -webkit-text-stroke: .25px #fff; }
.brand { padding-top: 39px; }
.brand h3 { font: 400 36px/40px "Liberation Serif", "Times New Roman", serif; }
.brand p { margin-top: 17px; }
.contact { padding-top: 37px; }
.crow { height: 58px; display: flex; align-items: center; gap: 19px; }
.dot { width: 38px; height: 38px; border-radius: 50%; background: #33383b; display: flex; align-items: center; justify-content: center; }
.where { padding-bottom: 4px; }
.where small { display: block; margin-top: 4px; font-size: 14px; line-height: 20px; }
.about { padding-top: 35px; }
.about h4 { font-size: 20px; line-height: 24px; font-weight: 400; color: #606060; }
.desc { margin-top: 18px; }
.desc p { font-size: 13px; line-height: 20px; letter-spacing: -.51px; white-space: nowrap; }
.social { margin-top: 25px; display: flex; gap: 7px; }
.social > span { width: 35px; height: 35px; border-radius: 2px; background: #33383b; display: flex; align-items: center; justify-content: center; }
.social > .yt { margin-left: 1px; }
.you, .tube { font: 700 9.5px "Liberation Sans", sans-serif; fill: #fff; }
.tube { fill: #33383b; }

.scrollbar { width: 19px; background: #2c2c2c; display: flex; flex-direction: column; align-items: center; padding: 6px 0 4px; }
.thumb { width: 11px; height: 363px; margin: 465px 0 18px; border-radius: 6px; background: #9f9f9f; }

/* Taskbar */
.taskbar { height: 60px; flex: none; background: #1c1c1c; border-top: 1px solid #404040; display: flex; align-items: center; }
.weather { width: 571.5px; padding-left: 24px; display: flex; align-items: center; gap: 10.5px; height: 59px; }
.wicon { position: relative; width: 30px; height: 30px; margin-top: 4px; }
.badge { position: absolute; left: 14.5px; top: -10px; width: 20px; height: 20px; border-radius: 50%; background: #ff99a4; color: #111; font-size: 14px; line-height: 20px; text-align: center; }
.wtext, .clock { display: flex; flex-direction: column; font-size: 14.5px; line-height: 20px; letter-spacing: -.3px; margin-top: -2px; }
.dim { color: #c2c2c2; }
.date { letter-spacing: .2px; }
.dock { display: flex; align-items: center; margin-top: -1px; }
.app { position: relative; width: 55px; height: 50px; display: flex; align-items: center; justify-content: center; }
.start { margin-right: 4.5px; }
.search { width: 275px; height: 40px; margin-right: 2px; border-radius: 20px; background: #3b3b3b; border: 1px solid #4d4d4d; display: flex; align-items: center; padding-left: 13px; gap: 11.5px; font-size: 16.5px; letter-spacing: -.3px; color: #d2d2d2; }
.active { width: 50px; margin: 0 2.5px; background: #2b2b2b; border: 1px solid #3a3a3a; border-radius: 6px; }
.ballbadge { position: absolute; right: 3px; top: 3px; }
.active::after { content: ""; position: absolute; bottom: 0; left: 14px; width: 20px; height: 4px; border-radius: 2px; background: #4cc2ff; }
.open::after { content: ""; position: absolute; bottom: 1px; left: 23.5px; width: 8px; height: 4px; border-radius: 2px; background: #9a9a9a; }
.glyph { font: 700 12px "Open Sans", sans-serif; fill: #fff; }
.tray { margin-left: auto; display: flex; align-items: center; padding-right: 24px; margin-top: -1px; }
.kbd { margin-left: 23px; }
.wifi { margin-left: 20px; }
.vol { margin-left: 10px; }
.bat { margin-left: 9.5px; }
.clock { width: 97px; text-align: right; }
```
